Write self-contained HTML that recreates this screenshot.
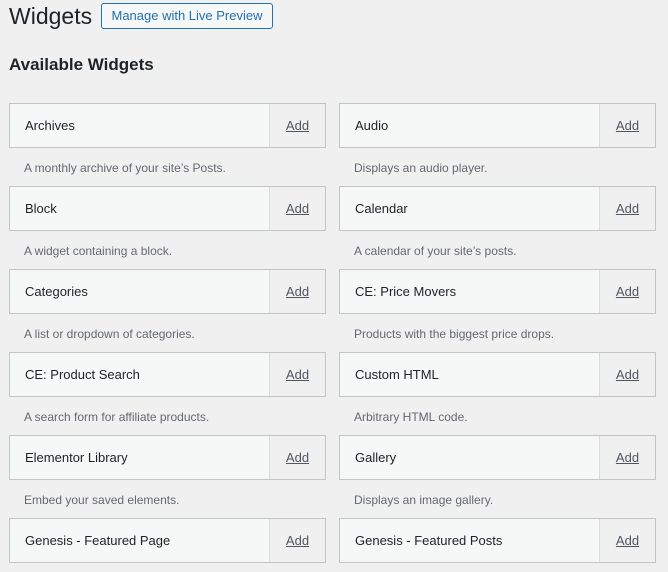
<!DOCTYPE html>
<html><head><style>
body{margin:0;background:#f0f0f1;font-family:"Liberation Sans",sans-serif;color:#1d2327;width:668px;height:572px;overflow:hidden;position:relative}
h1{position:absolute;left:9px;top:2px;margin:0;font-size:23px;font-weight:400;line-height:29px}
.btn{position:absolute;left:101px;top:3px;width:170px;height:24px;border:1px solid #2271b1;border-radius:3px;background:#f6f7f7;color:#2271b1;font-size:13px;line-height:24px;text-align:center;box-sizing:content-box}
h2{position:absolute;left:9px;top:54px;margin:0;font-size:17px;font-weight:700;line-height:22px}
.w{position:absolute;width:315px;height:43px;border:1px solid #c3c4c7;background:#f6f7f7;box-sizing:content-box}
.w .t{position:absolute;left:15px;top:0;line-height:43px;font-size:13px;}
.w .a{position:absolute;right:0;top:0;width:55px;height:43px;border-left:1px solid #dcdcde;background:#f0f0f1;text-align:center;line-height:43px;font-size:13px;color:#50575e;text-decoration:underline}
.d{position:absolute;font-size:12px;color:#646970;line-height:16px}
</style></head><body>
<h1>Widgets</h1>
<div class="btn">Manage with Live Preview</div>
<h2>Available Widgets</h2>

<div class="w" style="left:9px;top:103px"><span class="t">Archives</span><span class="a">Add</span></div>
<div class="d" style="left:24px;top:160px">A monthly archive of your site’s Posts.</div>
<div class="w" style="left:339px;top:103px"><span class="t">Audio</span><span class="a">Add</span></div>
<div class="d" style="left:354px;top:160px">Displays an audio player.</div>

<div class="w" style="left:9px;top:186px"><span class="t">Block</span><span class="a">Add</span></div>
<div class="d" style="left:24px;top:243px">A widget containing a block.</div>
<div class="w" style="left:339px;top:186px"><span class="t">Calendar</span><span class="a">Add</span></div>
<div class="d" style="left:354px;top:243px">A calendar of your site’s posts.</div>

<div class="w" style="left:9px;top:269px"><span class="t">Categories</span><span class="a">Add</span></div>
<div class="d" style="left:24px;top:326px">A list or dropdown of categories.</div>
<div class="w" style="left:339px;top:269px"><span class="t">CE: Price Movers</span><span class="a">Add</span></div>
<div class="d" style="left:354px;top:326px">Products with the biggest price drops.</div>

<div class="w" style="left:9px;top:352px"><span class="t">CE: Product Search</span><span class="a">Add</span></div>
<div class="d" style="left:24px;top:409px">A search form for affiliate products.</div>
<div class="w" style="left:339px;top:352px"><span class="t">Custom HTML</span><span class="a">Add</span></div>
<div class="d" style="left:354px;top:409px">Arbitrary HTML code.</div>

<div class="w" style="left:9px;top:435px"><span class="t">Elementor Library</span><span class="a">Add</span></div>
<div class="d" style="left:24px;top:492px">Embed your saved elements.</div>
<div class="w" style="left:339px;top:435px"><span class="t">Gallery</span><span class="a">Add</span></div>
<div class="d" style="left:354px;top:492px">Displays an image gallery.</div>

<div class="w" style="left:9px;top:518px"><span class="t">Genesis - Featured Page</span><span class="a">Add</span></div>
<div class="w" style="left:339px;top:518px"><span class="t">Genesis - Featured Posts</span><span class="a">Add</span></div>
</body></html>
